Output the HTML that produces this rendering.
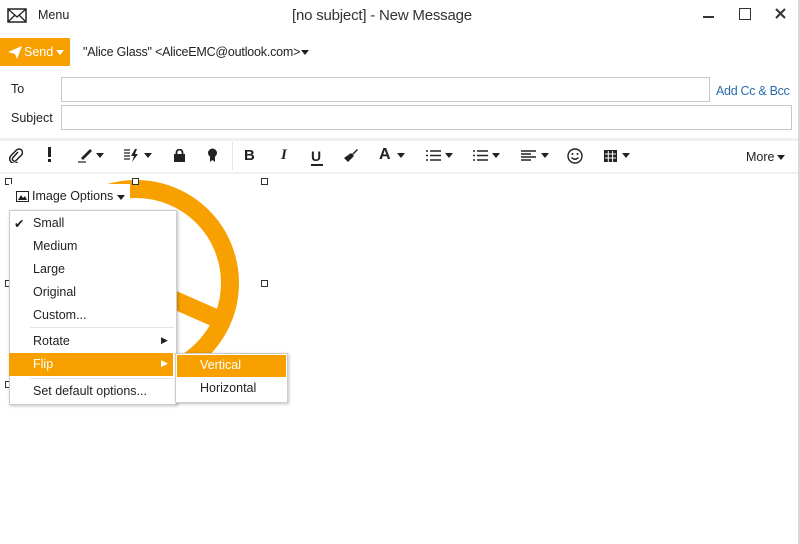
<!DOCTYPE html>
<html><head><style>
body{margin:0;width:800px;height:544px;background:#fff;font-family:"Liberation Sans",sans-serif;color:#222;position:relative;overflow:hidden;font-size:12.5px}
.a{position:absolute;white-space:nowrap}
.inp{position:absolute;border:1px solid #c8c8c8;background:#fff}
.h{position:absolute;width:5px;height:5px;border:1.5px solid #333;background:#fff}
.mi{position:absolute;left:33px;font-size:12.5px}
.tb{position:absolute;top:147px;font-size:15px;font-weight:bold}
.dd{position:absolute;top:153px;width:0;height:0;border-left:4px solid transparent;border-right:4px solid transparent;border-top:5px solid #222}
</style></head><body>
<div class="a" style="right:0;top:0;width:2px;height:544px;background:#d8d8d8"></div>
<svg class="a" style="left:7px;top:8px" width="20" height="15"><rect x="1" y="1" width="18" height="13" fill="none" stroke="#222" stroke-width="1.5"/><path d="M1 1L10 9L19 1M1 14L8 7M19 14L12 7" fill="none" stroke="#222" stroke-width="1.3"/></svg>
<div class="a" style="left:38px;top:8px;font-size:12.5px">Menu</div>
<div class="a" style="left:292px;top:7px;font-size:15px;color:#333;letter-spacing:-0.2px">[no subject] - New Message</div>
<div class="a" style="left:703px;top:16px;width:11px;height:2px;background:#333"></div>
<div class="a" style="left:739px;top:8px;width:10px;height:10px;border:1.5px solid #333"></div>
<svg class="a" style="left:775px;top:8px" width="11" height="11"><path d="M1 1L10 10M10 1L1 10" stroke="#333" stroke-width="2"/></svg>
<div class="a" style="left:0;top:38px;width:70px;height:28px;background:#f7a000"></div>
<svg class="a" style="left:8px;top:46px" width="14" height="13"><path d="M0 6L14 0L9 13L7 8Z" fill="#fff"/></svg>
<div class="a" style="left:24px;top:45px;color:#fff;font-size:12.5px">Send</div>
<div class="dd" style="left:56px;top:50px;border-top-color:#fff"></div>
<div class="a" style="left:83px;top:45px;font-size:12.5px;letter-spacing:-0.2px">"Alice Glass" &lt;AliceEMC@outlook.com&gt;</div>
<div class="dd" style="left:301px;top:50px"></div>
<div class="a" style="left:11px;top:82px">To</div>
<div class="inp" style="left:61px;top:77px;width:647px;height:23px"></div>
<div class="a" style="left:716px;top:84px;color:#2b6cb0;letter-spacing:-0.3px">Add Cc &amp; Bcc</div>
<div class="a" style="left:11px;top:111px">Subject</div>
<div class="inp" style="left:61px;top:105px;width:729px;height:23px"></div>
<div class="a" style="left:0;top:138px;width:798px;height:3px;background:#f0f0f0"></div>
<div class="a" style="left:0;top:172px;width:798px;height:2px;background:#f0f0f0"></div>
<div class="a" style="left:232px;top:142px;width:1px;height:28px;background:#e6e6e6"></div>
<svg class="a" style="left:9px;top:148px" width="14" height="15"><path d="M9 4L4 9.5a2 2 0 0 0 3 3L12.5 7a3.3 3.3 0 0 0-5-5L2 7.5a4.5 4.5 0 0 0 6.5 6.5" fill="none" stroke="#222" stroke-width="1.5"/></svg>
<div class="a" style="left:48px;top:147px;width:3px;height:10px;background:#222"></div>
<div class="a" style="left:48px;top:159px;width:3px;height:3px;background:#222"></div>
<svg class="a" style="left:77px;top:147px" width="16" height="16"><path d="M4 11L13 2L15 4L6 13Z" fill="#222"/><path d="M1 15H9" stroke="#222" stroke-width="1.2"/></svg>
<div class="dd" style="left:96px"></div>
<svg class="a" style="left:124px;top:149px" width="16" height="13"><path d="M0 1H6M0 4H6M0 7H6M0 10H6" stroke="#222" stroke-width="1.3"/><path d="M11 0L7 7H10L8 13L14 5H11L13 0Z" fill="#222"/></svg>
<div class="dd" style="left:144px"></div>
<svg class="a" style="left:174px;top:149px" width="11" height="13"><rect x="0" y="5" width="11" height="8" fill="#222"/><path d="M2.5 6V3.5a3 3 0 0 1 6 0V6" fill="none" stroke="#222" stroke-width="1.8"/></svg>
<svg class="a" style="left:207px;top:148px" width="11" height="15"><circle cx="5.5" cy="5" r="4.5" fill="#222"/><path d="M3 9L3 14L5.5 12L8 14L8 9Z" fill="#222"/></svg>
<div class="tb" style="left:244px">B</div>
<div class="tb" style="left:281px;font-style:italic;font-family:'Liberation Serif',serif">I</div>
<div class="a" style="left:311px;top:148px;font-size:14px;font-weight:bold">U</div>
<div class="a" style="left:311px;top:164px;width:12px;height:1.5px;background:#222"></div>
<svg class="a" style="left:343px;top:147px" width="16" height="16"><path d="M9 7L14 2L15 3L10 8Z" fill="#222"/><path d="M8 6L11 9L5 15L1 11Z" fill="#222"/></svg>
<div class="a" style="left:379px;top:146px;font-size:16px;font-weight:bold">A</div>
<div class="dd" style="left:397px"></div>
<svg class="a" style="left:426px;top:150px" width="15" height="11"><path d="M0 1H2M0 5.5H2M0 10H2M4 1H15M4 5.5H15M4 10H15" stroke="#222" stroke-width="1.6"/></svg>
<div class="dd" style="left:445px"></div>
<svg class="a" style="left:473px;top:149px" width="15" height="13"><path d="M0 2H2M0 6.5H2M0 11H2" stroke="#222" stroke-width="1.4"/><path d="M4 2H15M4 6.5H15M4 11H15" stroke="#222" stroke-width="1.6"/></svg>
<div class="dd" style="left:492px"></div>
<svg class="a" style="left:521px;top:150px" width="15" height="11"><path d="M0 1H15M0 4H10M0 7H15M0 10H10" stroke="#222" stroke-width="1.4"/></svg>
<div class="dd" style="left:541px"></div>
<svg class="a" style="left:567px;top:148px" width="16" height="16"><circle cx="8" cy="8" r="7" fill="none" stroke="#222" stroke-width="1.4"/><circle cx="5.5" cy="6" r="1" fill="#222"/><circle cx="10.5" cy="6" r="1" fill="#222"/><path d="M4.5 9.5Q8 13 11.5 9.5" fill="none" stroke="#222" stroke-width="1.3"/></svg>
<svg class="a" style="left:604px;top:150px" width="13" height="12"><rect width="13" height="12" fill="#222"/><path d="M4.3 1V12M8.6 1V12M1 4H12M1 8H12" stroke="#fff" stroke-width="1"/></svg>
<div class="dd" style="left:622px"></div>
<div class="a" style="left:746px;top:150px">More</div>
<div class="dd" style="left:777px;top:155px"></div>
<svg class="a" style="left:0;top:170px" width="300" height="240">
<circle cx="136" cy="113" r="94" fill="none" stroke="#f7a000" stroke-width="18"/>
<path d="M136 113L220 150" stroke="#f7a000" stroke-width="18"/>
</svg>
<div class="h" style="left:5px;top:178px"></div><div class="h" style="left:132px;top:178px"></div><div class="h" style="left:261px;top:178px"></div>
<div class="h" style="left:261px;top:280px"></div><div class="h" style="left:5px;top:280px"></div><div class="h" style="left:5px;top:381px"></div>
<div class="a" style="left:9px;top:184px;width:121px;height:26px;background:#fff"></div>
<svg class="a" style="left:16px;top:191px" width="13" height="11"><rect x=".5" y=".5" width="12" height="10" fill="none" stroke="#222"/><path d="M2 9L5 4L7 7L9 5L11 9Z" fill="#222"/></svg>
<div class="a" style="left:32px;top:189px">Image Options</div>
<div class="dd" style="left:117px;top:195px"></div>
<div class="a" style="left:9px;top:210px;width:166px;height:193px;background:#fff;border:1px solid #ccc;box-shadow:1px 1px 3px rgba(0,0,0,.25)"></div>
<div class="a" style="left:14px;top:216px">✔</div>
<div class="mi" style="top:216px">Small</div>
<div class="mi" style="top:239px">Medium</div>
<div class="mi" style="top:262px">Large</div>
<div class="mi" style="top:285px">Original</div>
<div class="mi" style="top:308px">Custom...</div>
<div class="a" style="left:30px;top:327px;width:144px;height:1px;background:#e4e4e4"></div>
<div class="mi" style="top:334px">Rotate</div>
<div class="a" style="left:161px;top:335px;font-size:9px">▶</div>
<div class="a" style="left:9px;top:353px;width:164px;height:23px;background:#f7a000"></div>
<div class="mi" style="top:357px;color:#fff">Flip</div>
<div class="a" style="left:161px;top:358px;font-size:9px;color:#fff">▶</div>
<div class="a" style="left:30px;top:378px;width:144px;height:1px;background:#e4e4e4"></div>
<div class="mi" style="top:384px">Set default options...</div>
<div class="a" style="left:175px;top:353px;width:111px;height:48px;background:#fff;border:1px solid #ccc;box-shadow:1px 1px 3px rgba(0,0,0,.25)"></div>
<div class="a" style="left:177px;top:355px;width:109px;height:22px;background:#f7a000"></div>
<div class="a" style="left:200px;top:358px;color:#fff">Vertical</div>
<div class="a" style="left:200px;top:381px">Horizontal</div>
</body></html>
